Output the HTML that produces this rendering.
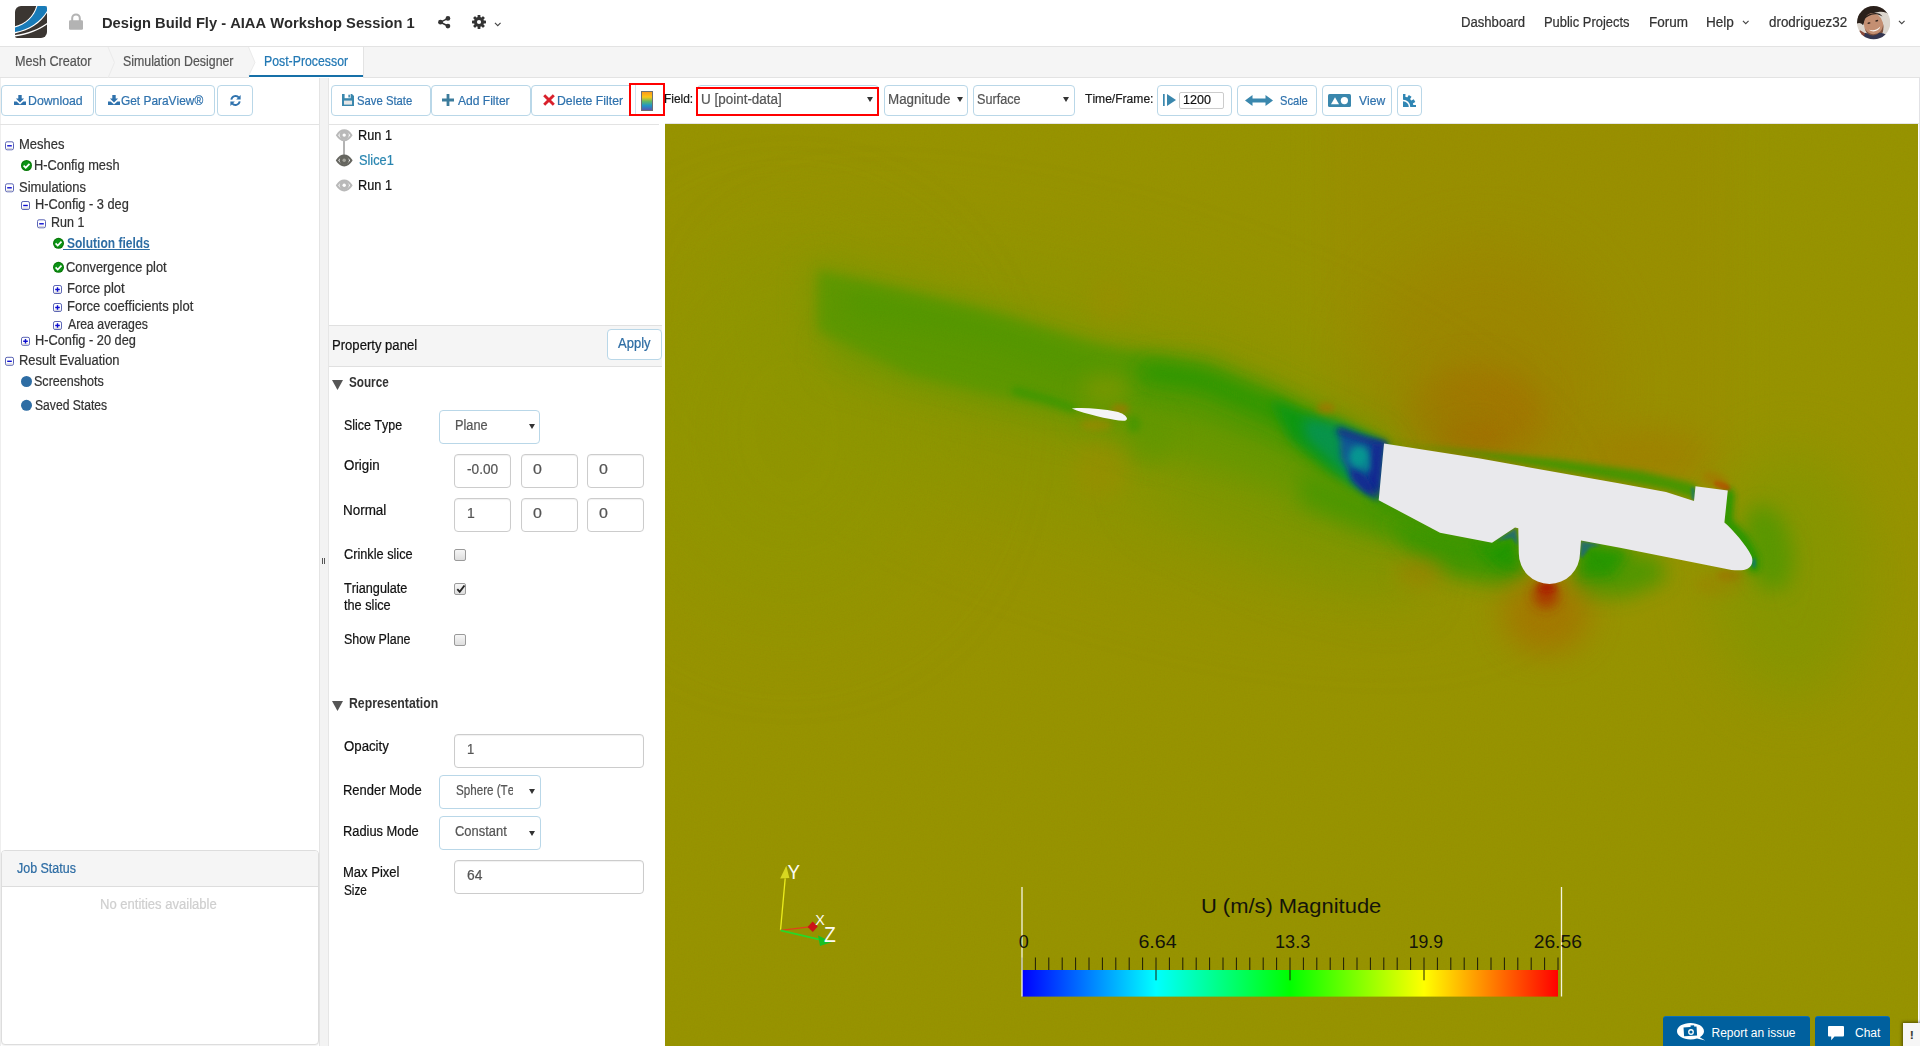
<!DOCTYPE html>
<html lang="en">
<head>
<meta charset="utf-8">
<title>Design Build Fly - AIAA Workshop Session 1 - Post-Processor</title>
<style>
*{box-sizing:border-box;margin:0;padding:0}
html,body{width:1920px;height:1046px;overflow:hidden;background:#fff}
body{font-family:"Liberation Sans",sans-serif;font-size:14px;color:#333;position:relative;font-kerning:none}
.abs{position:absolute}
.t{position:absolute;white-space:nowrap;line-height:1;transform-origin:0 0;display:block;-webkit-text-stroke:.22px currentColor}
.btn{position:absolute;border:1px solid #b9d7e8;border-radius:4px;background:#fff}
.inp{position:absolute;border:1px solid #ccc;border-radius:4px;background:#fff;box-shadow:inset 0 1px 1px rgba(0,0,0,.06)}
.sel{position:absolute;border:1px solid #b9d7e8;border-radius:4px;background:#fff}
.arr{position:absolute;width:0;height:0;border-left:3px solid transparent;border-right:3px solid transparent;border-top:5.5px solid #333}
.cb{position:absolute;width:12px;height:12px;border:1px solid #9a9a9a;border-radius:2px;background:linear-gradient(#f6f6f6,#dedede)}
svg{position:absolute;overflow:visible}
#header{left:0;top:0;width:1920px;height:46px;background:#fff}
#tabs{left:0;top:46px;width:1920px;height:32px;background:#f5f5f5;border-top:1px solid #e3e3e3;border-bottom:1px solid #e3e3e3}
#left{left:0;top:78px;width:320px;height:968px;background:#fff;box-shadow:inset -1px 0 0 #e4e4e4, inset 1px 0 0 #eee}
#split{left:320px;top:78px;width:9px;height:968px;background:#f3f3f3;border-right:1px solid #e6e6e6}
#mid{left:329px;top:78px;width:336px;height:968px;background:#fff}
#tool{left:665px;top:78px;width:1255px;height:46px;background:#fff}
#viz{left:665px;top:124px;width:1253px;height:922px;background:#969200}
#redge{left:1919px;top:78px;width:1px;height:968px;background:#e2e2e6}
</style>
</head>
<body>
<!-- ===== top header ===== -->
<div id="header" class="abs">
  <svg id="logo" style="left:15px;top:6px" width="32" height="32" viewBox="0 0 32 32">
    <defs><clipPath id="lgc"><path d="M6 0H30a2 2 0 0 1 2 2V26a6 6 0 0 1-6 6H2a2 2 0 0 1-2-2V6a6 6 0 0 1 6-6z"/></clipPath></defs>
    <g clip-path="url(#lgc)">
      <rect width="32" height="32" fill="#3b3632"/>
      <path d="M-1 20.600C10 18 19 10 21.500 -1L33 -1L33 5C27 17 14 25 -1 27.600Z" fill="#fff"/>
      <path d="M-1 21.800C10.500 19 20 10.500 22.700 -1L33 -1L33 3.200C26.500 15.500 14 23.600 -1 26.300Z" fill="#187bb8"/>
      <path d="M-1 29.200C13 27.500 25 22.500 33 16.200L33 17.800C25 24 13 29 -1 30.600Z" fill="#fff"/>
    </g>
  </svg>
  <svg id="lock" style="left:69px;top:13px" width="14" height="17" viewBox="0 0 14 17">
    <path d="M3.2 8V5.2a3.8 3.8 0 0 1 7.6 0V8" fill="none" stroke="#b3b3b3" stroke-width="2"/>
    <rect x="0" y="7.3" width="14" height="9.4" rx="1.2" fill="#b3b3b3"/>
  </svg>
  <span class="t" style="left:102.3px;top:14.8px;font-size:15.5px;color:#2b2b2b;transform:scaleX(0.9480);font-weight:700;-webkit-text-stroke:0;">Design Build Fly - AIAA Workshop Session 1</span>
  <svg id="share" style="left:437.600px;top:15.900px" width="12.400" height="12.400" viewBox="0 0 13 13">
    <path d="M10.400 2.500L2.600 6.500l7.800 4" fill="none" stroke="#333" stroke-width="1.600"/>
    <circle cx="10.400" cy="2.500" r="2.500" fill="#333"/><circle cx="2.600" cy="6.500" r="2.500" fill="#333"/><circle cx="10.400" cy="10.500" r="2.500" fill="#333"/>
  </svg>
  <svg id="gear" style="left:472px;top:15.200px" width="14" height="14" viewBox="0 0 14 14">
    <g fill="#333"><circle cx="7" cy="7" r="5"/>
    <g id="gt"><rect x="5.6" y="0" width="2.8" height="14" rx=".6"/></g>
    <rect x="5.6" y="0" width="2.8" height="14" rx=".6" transform="rotate(45 7 7)"/>
    <rect x="5.6" y="0" width="2.8" height="14" rx=".6" transform="rotate(90 7 7)"/>
    <rect x="5.6" y="0" width="2.8" height="14" rx=".6" transform="rotate(135 7 7)"/></g>
    <circle cx="7" cy="7" r="2.1" fill="#fff"/>
  </svg>
  <svg style="left:494.300px;top:21.800px" width="7.500" height="5" viewBox="0 0 8 5"><path d="M1 .8L4 3.8L7 .8" fill="none" stroke="#444" stroke-width="1.2"/></svg>

  <span class="t" style="left:1461.2px;top:15.0px;font-size:14px;color:#333;transform:scaleX(0.9368);">Dashboard</span>
  <span class="t" style="left:1544.4px;top:15.0px;font-size:14px;color:#333;transform:scaleX(0.9231);">Public Projects</span>
  <span class="t" style="left:1648.6px;top:15.0px;font-size:14px;color:#333;transform:scaleX(0.9642);">Forum</span>
  <span class="t" style="left:1706.3px;top:15.0px;font-size:14px;color:#333;transform:scaleX(0.9696);">Help</span>
  <svg style="left:1742.300px;top:19.600px" width="7.500" height="5" viewBox="0 0 8 5"><path d="M1 .8L4 3.8L7 .8" fill="none" stroke="#444" stroke-width="1.2"/></svg>
  <span class="t" style="left:1768.6px;top:15.0px;font-size:14px;color:#333;transform:scaleX(0.9565);">drodriguez32</span>
  <svg id="avatar" style="left:1857px;top:5.700px" width="33.300" height="33.300" viewBox="0 0 33 33">
    <defs><clipPath id="avc"><circle cx="16.500" cy="16.500" r="16.500"/></clipPath></defs>
    <g clip-path="url(#avc)">
      <rect width="33" height="33" fill="#dcd6ce"/>
      <path d="M-1 -1H34V10C30 6 25 5 21 6C14 7 9 11 6 19C4 17 2 16 -1 18Z" fill="#2a201b"/>
      <g transform="rotate(-14 16 19)">
        <ellipse cx="16.500" cy="19" rx="9.500" ry="12" fill="#c48f72"/>
        <path d="M7 20c1 9 5 12 9.500 12s8.500-3 9.500-12c-2 6-5 8-9.500 8S9 26 7 20z" fill="#7e523e"/>
        <path d="M11 22.500c3.500 2.200 8.500 2 11.500-.5c-1.500 4-9 4.500-11.500.5z" fill="#f7f1ec"/>
        <path d="M6.500 14C8 6 25 5 27 13c-4-4-7-4.500-10-4.300C13 9 9 10.500 6.500 14z" fill="#2a201b"/>
        <ellipse cx="12.500" cy="16" rx="1.500" ry=".8" fill="#3a2820"/><ellipse cx="20.500" cy="15.600" rx="1.500" ry=".8" fill="#3a2820"/>
      </g>
      <path d="M-1 34c2-7 7-8 11-7c4 3 8 3 12-.5c3 0 6 1 8 3l3 5z" fill="#343650"/>
      <path d="M3 24l5 3-3 7-6-2z" fill="#8a4a3a"/>
    </g>
  </svg>
  <svg style="left:1898.200px;top:19.600px" width="7.500" height="5" viewBox="0 0 8 5"><path d="M1 .8L4 3.8L7 .8" fill="none" stroke="#444" stroke-width="1.2"/></svg>
</div>

<!-- ===== workflow tabs ===== -->
<div id="tabs" class="abs">
  <div class="abs" style="left:249px;top:0;width:115px;height:31px;background:#fff;border-right:1px solid #e3e3e3"></div>
  <div class="abs" style="left:249px;top:28px;width:114px;height:2px;background:#1670a8"></div>
  <svg style="left:0;top:0" width="380" height="31" viewBox="0 0 380 31">
    <path d="M108 0L114.5 15.5L108 31" fill="none" stroke="#ebebeb" stroke-width="1"/>
    <path d="M248.5 0L255 15.5L248.5 29" fill="#f5f5f5" stroke="#ebebeb" stroke-width="1"/>
  </svg>
  <span class="t" style="left:15.2px;top:7.0px;font-size:14px;color:#555;transform:scaleX(0.9030);">Mesh Creator</span>
  <span class="t" style="left:122.5px;top:7.0px;font-size:14px;color:#555;transform:scaleX(0.8819);">Simulation Designer</span>
  <span class="t" style="left:263.8px;top:7.0px;font-size:14px;color:#2278b4;transform:scaleX(0.8784);">Post-Processor</span>
</div>
<!-- ===== left panel: project tree ===== -->
<div id="left" class="abs">
  <div class="btn" style="left:1px;top:7px;width:93px;height:31px"></div>
  <svg style="left:14px;top:17px" width="12" height="10" viewBox="0 0 12 10"><path d="M4.3 0h3.4v3.6h2.4L6 7.6 1.9 3.6h2.4z" fill="#2f72ad"/><path d="M0 6.6h2.6L6 9.4 9.4 6.6H12V10H0z" fill="#2f72ad"/></svg>
  <span class="t" style="left:27.5px;top:16.0px;font-size:13px;color:#2f72ad;transform:scaleX(0.9464);">Download</span>
  <div class="btn" style="left:95px;top:7px;width:120px;height:31px"></div>
  <svg style="left:108px;top:17px" width="12" height="10" viewBox="0 0 12 10"><path d="M4.3 0h3.4v3.6h2.4L6 7.6 1.9 3.6h2.4z" fill="#2f72ad"/><path d="M0 6.6h2.6L6 9.4 9.4 6.6H12V10H0z" fill="#2f72ad"/></svg>
  <span class="t" style="left:121.4px;top:16.0px;font-size:13px;color:#2f72ad;transform:scaleX(0.9149);">Get ParaView®</span>
  <div class="btn" style="left:217px;top:7px;width:36px;height:31px"></div>
  <svg style="left:230px;top:17px" width="11" height="11" viewBox="0 0 11 11">
    <path d="M1.3 4.6A4.3 4.3 0 0 1 8.9 2.7" fill="none" stroke="#2f72ad" stroke-width="1.9"/><path d="M10.6 0v4.4H6.2z" fill="#2f72ad"/>
    <path d="M9.7 6.4A4.3 4.3 0 0 1 2.1 8.3" fill="none" stroke="#2f72ad" stroke-width="1.9"/><path d="M.4 11V6.6h4.4z" fill="#2f72ad"/>
  </svg>
  <div class="abs" style="left:0;top:46px;width:319px;height:1px;background:#e3e3e3"></div>

  <svg id="tree-icons" style="left:0;top:0" width="320" height="420" viewBox="0 78 320 420">
    <defs>
      <g id="mi"><rect x=".5" y=".5" width="8" height="8" rx="1.600" fill="#fff" stroke="#5a64b4" stroke-width="1"/><path d="M1.500 7.200h6" stroke="#d4d4dc" stroke-width="1.400"/><path d="M2.200 4.500h4.600" stroke="#0c0cd2" stroke-width="1.400"/></g>
      <g id="pl"><rect x=".5" y=".5" width="8" height="8" rx="1.600" fill="#fff" stroke="#5a64b4" stroke-width="1"/><path d="M1.500 7.200h6" stroke="#d4d4dc" stroke-width="1.400"/><path d="M2.200 4.500h4.600M4.500 2.200v4.600" stroke="#0c0cd2" stroke-width="1.400"/></g>
      <g id="ck"><circle cx="5.500" cy="5.500" r="5.500" fill="#087a08"/><circle cx="5.500" cy="5.500" r="4.300" fill="#0c9416"/><path d="M2.6 5.6l2.1 2.1 3.8-3.9" fill="none" stroke="#fff" stroke-width="1.7"/></g>
      <g id="dot"><circle cx="5.5" cy="5.5" r="5.5" fill="#2e6da4"/></g>
    </defs>
    <use href="#mi" x="5" y="141.3"/>
    <use href="#ck" x="21" y="160"/>
    <use href="#mi" x="5" y="183.3"/>
    <use href="#mi" x="21" y="201"/>
    <use href="#mi" x="37" y="219.3"/>
    <use href="#ck" x="53" y="237.8"/>
    <use href="#ck" x="53" y="261.8"/>
    <use href="#pl" x="53" y="285"/>
    <use href="#pl" x="53" y="303"/>
    <use href="#pl" x="53" y="321"/>
    <use href="#pl" x="21" y="336.8"/>
    <use href="#mi" x="5" y="356.8"/>
    <use href="#dot" x="21" y="376"/>
    <use href="#dot" x="21" y="399.8"/>
  </svg>
  <span class="t" style="left:18.5px;top:59.4px;font-size:14px;color:#333;transform:scaleX(0.9266);">Meshes</span>
  <span class="t" style="left:34.0px;top:80.0px;font-size:14px;color:#333;transform:scaleX(0.9160);">H-Config mesh</span>
  <span class="t" style="left:18.9px;top:101.5px;font-size:14px;color:#333;transform:scaleX(0.9249);">Simulations</span>
  <span class="t" style="left:34.6px;top:119.0px;font-size:14px;color:#333;transform:scaleX(0.9132);">H-Config - 3 deg</span>
  <span class="t" style="left:50.9px;top:137.4px;font-size:14px;color:#333;transform:scaleX(0.8926);">Run 1</span>
  <span class="t" style="left:66.8px;top:158.3px;font-size:14px;color:#2e6da4;transform:scaleX(0.8586);font-weight:700;-webkit-text-stroke:0;text-decoration:underline;">Solution fields</span>
  <div class="abs" style="left:63px;top:171px;width:5px;height:1px;background:#2e6da4"></div>
  <span class="t" style="left:66.4px;top:182.1px;font-size:14px;color:#333;transform:scaleX(0.9166);">Convergence plot</span>
  <span class="t" style="left:66.9px;top:203.0px;font-size:14px;color:#333;transform:scaleX(0.9262);">Force plot</span>
  <span class="t" style="left:66.9px;top:220.8px;font-size:14px;color:#333;transform:scaleX(0.9270);">Force coefficients plot</span>
  <span class="t" style="left:67.9px;top:238.8px;font-size:14px;color:#333;transform:scaleX(0.8772);">Area averages</span>
  <span class="t" style="left:34.6px;top:254.6px;font-size:14px;color:#333;transform:scaleX(0.9134);">H-Config - 20 deg</span>
  <span class="t" style="left:18.5px;top:274.7px;font-size:14px;color:#333;transform:scaleX(0.9226);">Result Evaluation</span>
  <span class="t" style="left:34.4px;top:295.9px;font-size:14px;color:#333;transform:scaleX(0.8964);">Screenshots</span>
  <span class="t" style="left:34.5px;top:320.0px;font-size:14px;color:#333;transform:scaleX(0.8658);">Saved States</span>

  <!-- job status -->
  <div id="jobs" class="abs" style="left:1px;top:772px;width:318px;height:195px;border:1px solid #ddd;border-radius:4px;background:#fff;box-shadow:0 1px 1px rgba(0,0,0,.05)">
    <div class="abs" style="left:0;top:0;width:316px;height:36px;background:#f5f5f5;border-bottom:1px solid #ddd;border-radius:3px 3px 0 0"></div>
  </div>
  <span class="t" style="left:17.4px;top:783.0px;font-size:14px;color:#2e6da4;transform:scaleX(0.8902);">Job Status</span>
  <span class="t" style="left:100.2px;top:819.1px;font-size:14px;color:#cfcfcf;transform:scaleX(0.9312);">No entities available</span>
</div>
<div id="split" class="abs">
  <div class="abs" style="left:2px;top:480px;width:1px;height:6px;background:#555"></div>
  <div class="abs" style="left:4px;top:480px;width:1px;height:6px;background:#555"></div>
</div>
<!-- ===== middle panel: pipeline + property panel ===== -->
<div id="mid" class="abs">
  <div class="btn" style="left:2px;top:7px;width:100px;height:31px"></div>
  <svg style="left:13px;top:16px" width="12" height="12" viewBox="0 0 12 12"><path d="M0 0h10l2 2v10H0z" fill="#3a87ad"/><rect x="2.6" y="0" width="6" height="4.2" fill="#fff"/><rect x="6.4" y=".7" width="1.5" height="2.8" fill="#3a87ad"/><rect x="2" y="6.6" width="8" height="4" fill="#e6e6e6"/></svg>
  <span class="t" style="left:28.0px;top:16.2px;font-size:13px;color:#2f72ad;transform:scaleX(0.8689);">Save State</span>
  <div class="btn" style="left:102px;top:7px;width:100px;height:31px"></div>
  <svg style="left:113px;top:16px" width="12" height="12" viewBox="0 0 12 12"><path d="M4.6 0h2.8v4.6H12v2.8H7.4V12H4.6V7.4H0V4.6h4.6z" fill="#3c7c9c"/></svg>
  <span class="t" style="left:128.8px;top:16.2px;font-size:13px;color:#2f72ad;transform:scaleX(0.9282);">Add Filter</span>
  <div class="btn" style="left:202px;top:7px;width:106px;height:31px"></div>
  <svg style="left:213.5px;top:16px" width="12" height="12" viewBox="0 0 12 12"><path d="M1.2 1.2l9.6 9.6M10.8 1.2l-9.6 9.6" stroke="#d9202b" stroke-width="2.9"/></svg>
  <span class="t" style="left:227.7px;top:16.2px;font-size:13px;color:#2f72ad;transform:scaleX(0.9423);">Delete Filter</span>
  <!-- colour legend toggle (highlighted) -->
  <div class="abs" style="left:300px;top:5px;width:36px;height:33px;border:2px solid #f00;background:#fff"></div>
  <div class="abs" style="left:306px;top:7px;width:1px;height:29px;background:#cfe3ef"></div>
  <div class="abs" style="left:312px;top:13px;width:12px;height:20px;border:1.5px solid #6e6e72;background:linear-gradient(#fb9a1a 0%,#fbc616 28%,#63b864 52%,#1f95c9 76%,#5a58ae 100%)"></div>
  <div class="abs" style="left:0;top:46px;width:330px;height:1px;background:#e3e3e3"></div>

  <!-- pipeline -->
  <svg style="left:0;top:46px" width="70" height="80" viewBox="329 124 70 80">
    <defs>
      <g id="eye"><path d="M.8 5.800C3.200 2 5.600 .8 8 .8s4.800 1.200 7.200 5c-2.400 3.800-4.800 5-7.200 5S3.200 9.600 .8 5.800z" fill="#fff" stroke="currentColor" stroke-width="2"/><circle cx="8" cy="5.700" r="4.700" fill="currentColor"/></g>
    </defs>
    <path d="M344 141v14" stroke="#a6a6a6" stroke-width="1.700"/>
    <use href="#eye" x="336.200" y="129.400" color="#b9b9b9"/><circle cx="344.200" cy="135.100" r="1.700" fill="#fff"/>
    <use href="#eye" x="336.200" y="154.600" color="#666660"/><circle cx="344.200" cy="160.300" r="1.700" fill="#a4a49c"/>
    <use href="#eye" x="336.200" y="179.600" color="#b9b9b9"/><circle cx="344.200" cy="185.300" r="1.700" fill="#fff"/>
  </svg>
  <span class="t" style="left:29.3px;top:50.0px;font-size:14px;color:#111;transform:scaleX(0.9095);">Run 1</span>
  <span class="t" style="left:29.7px;top:75.0px;font-size:14px;color:#2985b0;transform:scaleX(0.9112);">Slice1</span>
  <span class="t" style="left:29.3px;top:99.7px;font-size:14px;color:#111;transform:scaleX(0.9095);">Run 1</span>

  <!-- property panel header -->
  <div class="abs" style="left:0;top:247px;width:333px;height:42px;background:#f5f5f5;border-top:1px solid #e0e0e0;border-bottom:1px solid #e0e0e0"></div>
  <span class="t" style="left:3.4px;top:259.5px;font-size:14px;color:#111;transform:scaleX(0.9348);">Property panel</span>
  <div class="btn" style="left:278px;top:251px;width:55px;height:31px"></div>
  <span class="t" style="left:289.3px;top:258.0px;font-size:14px;color:#2e6da4;transform:scaleX(0.9286);">Apply</span>

  <!-- Source group -->
  <svg style="left:3.300px;top:301.600px" width="11" height="10" viewBox="0 0 11 10"><path d="M0 0h11L5.500 10z" fill="#555"/></svg>
  <span class="t" style="left:20.0px;top:296.8px;font-size:14px;color:#333;transform:scaleX(0.8365);font-weight:600;-webkit-text-stroke:0;">Source</span>
  <span class="t" style="left:14.9px;top:339.7px;font-size:14px;color:#111;transform:scaleX(0.8889);">Slice Type</span>
  <div class="sel" style="left:110px;top:332px;width:101px;height:34px"></div>
  <span class="t" style="left:126.1px;top:339.7px;font-size:14px;color:#555;transform:scaleX(0.9088);">Plane</span>
  <div class="arr" style="left:199.500px;top:345.500px"></div>

  <span class="t" style="left:14.9px;top:380.1px;font-size:14px;color:#111;transform:scaleX(0.9533);">Origin</span>
  <div class="inp" style="left:125px;top:376px;width:57px;height:34px"></div>
  <div class="inp" style="left:192px;top:376px;width:57px;height:34px"></div>
  <div class="inp" style="left:258px;top:376px;width:57px;height:34px"></div>
  <span class="t" style="left:137.8px;top:383.8px;font-size:14px;color:#555;transform:scaleX(0.9756);">-0.00</span>
  <span class="t" style="left:203.6px;top:383.8px;font-size:14px;color:#555;transform:scaleX(1.1407);">0</span>
  <span class="t" style="left:270.3px;top:383.8px;font-size:14px;color:#555;transform:scaleX(1.1407);">0</span>

  <span class="t" style="left:14.4px;top:424.5px;font-size:14px;color:#111;transform:scaleX(0.9605);">Normal</span>
  <div class="inp" style="left:125px;top:420px;width:57px;height:34px"></div>
  <div class="inp" style="left:192px;top:420px;width:57px;height:34px"></div>
  <div class="inp" style="left:258px;top:420px;width:57px;height:34px"></div>
  <span class="t" style="left:137.8px;top:428.2px;font-size:14px;color:#555;transform:scaleX(0.9959);">1</span>
  <span class="t" style="left:203.6px;top:428.2px;font-size:14px;color:#555;transform:scaleX(1.1407);">0</span>
  <span class="t" style="left:270.3px;top:428.2px;font-size:14px;color:#555;transform:scaleX(1.1407);">0</span>

  <span class="t" style="left:14.8px;top:468.8px;font-size:14px;color:#111;transform:scaleX(0.9095);">Crinkle slice</span>
  <div class="cb" style="left:125px;top:471px"></div>
  <span class="t" style="left:15.3px;top:502.5px;font-size:14px;color:#111;transform:scaleX(0.9049);">Triangulate</span>
  <span class="t" style="left:15.3px;top:520.2px;font-size:14px;color:#111;transform:scaleX(0.9089);">the slice</span>
  <div class="cb" style="left:125px;top:505px"></div>
  <svg style="left:126.500px;top:505.500px" width="10" height="10" viewBox="0 0 10 10"><path d="M1.300 5.200l2.400 2.600 4.800-6.300" fill="none" stroke="#222" stroke-width="1.900"/></svg>
  <span class="t" style="left:14.9px;top:553.9px;font-size:14px;color:#111;transform:scaleX(0.8898);">Show Plane</span>
  <div class="cb" style="left:125px;top:556px"></div>

  <!-- Representation group -->
  <svg style="left:3.300px;top:623px" width="11" height="10" viewBox="0 0 11 10"><path d="M0 0h11L5.500 10z" fill="#555"/></svg>
  <span class="t" style="left:19.6px;top:618.0px;font-size:14px;color:#333;transform:scaleX(0.8748);font-weight:600;-webkit-text-stroke:0;">Representation</span>
  <span class="t" style="left:14.5px;top:661.0px;font-size:14px;color:#111;transform:scaleX(0.9451);">Opacity</span>
  <div class="inp" style="left:125px;top:656px;width:190px;height:34px"></div>
  <span class="t" style="left:137.7px;top:663.9px;font-size:14px;color:#555;transform:scaleX(0.9306);">1</span>
  <span class="t" style="left:14.1px;top:704.8px;font-size:14px;color:#111;transform:scaleX(0.9265);">Render Mode</span>
  <div class="sel" style="left:110px;top:697px;width:102px;height:34px"></div>
  <div class="abs" style="left:127px;top:702px;width:57px;height:24px;overflow:hidden"><span class="t" style="left:-0.4px;top:2.8px;font-size:14px;color:#555;transform:scaleX(0.8307);">Sphere (Tessellated)</span></div>
  <div class="arr" style="left:199.500px;top:711px"></div>
  <span class="t" style="left:14.1px;top:746.0px;font-size:14px;color:#111;transform:scaleX(0.9176);">Radius Mode</span>
  <div class="sel" style="left:110px;top:738px;width:102px;height:34px"></div>
  <span class="t" style="left:126.4px;top:746.0px;font-size:14px;color:#555;transform:scaleX(0.9234);">Constant</span>
  <div class="arr" style="left:199.500px;top:752.500px"></div>
  <span class="t" style="left:14.1px;top:787.0px;font-size:14px;color:#111;transform:scaleX(0.9313);">Max Pixel</span>
  <span class="t" style="left:14.6px;top:804.6px;font-size:14px;color:#111;transform:scaleX(0.8385);">Size</span>
  <div class="inp" style="left:125px;top:782px;width:190px;height:34px"></div>
  <span class="t" style="left:137.9px;top:789.7px;font-size:14px;color:#555;transform:scaleX(0.9878);">64</span>
</div>
<!-- ===== viewer toolbar ===== -->
<div id="tool" class="abs">
  <span class="t" style="left:-1.0px;top:14.7px;font-size:12.5px;color:#1a1a1a;transform:scaleX(0.9544);">Field:</span>
  <div class="sel" style="left:32px;top:7px;width:182px;height:31px"></div>
  <div class="abs" style="left:31px;top:9px;width:183px;height:29px;border:2px solid #f00;background:#fff"></div>
  <span class="t" style="left:36.4px;top:13.9px;font-size:14px;color:#555;transform:scaleX(0.9612);">U [point-data]</span>
  <div class="arr" style="left:201.500px;top:19px"></div>
  <div class="sel" style="left:219px;top:7px;width:84px;height:31px"></div>
  <span class="t" style="left:222.6px;top:13.9px;font-size:14px;color:#555;transform:scaleX(0.9556);">Magnitude</span>
  <div class="arr" style="left:291.500px;top:19px"></div>
  <div class="sel" style="left:308px;top:7px;width:102px;height:31px"></div>
  <span class="t" style="left:311.9px;top:13.9px;font-size:14px;color:#555;transform:scaleX(0.9043);">Surface</span>
  <div class="arr" style="left:398px;top:19px"></div>
  <span class="t" style="left:420.1px;top:15.0px;font-size:12.5px;color:#1a1a1a;transform:scaleX(0.9667);">Time/Frame:</span>
  <div class="btn" style="left:492px;top:7px;width:75px;height:31px"></div>
  <svg style="left:498px;top:16px" width="13" height="12" viewBox="0 0 13 12"><rect x="0" y="0" width="1.700" height="12" fill="#3a87ad"/><path d="M4 0l9 6-9 6z" fill="#3a87ad"/></svg>
  <div class="abs" style="left:514px;top:13.500px;width:45px;height:17px;border:1px solid #ccc;border-radius:2px;background:#fff"></div>
  <span class="t" style="left:518.3px;top:14.7px;font-size:13px;color:#111;transform:scaleX(0.9636);">1200</span>
  <div class="btn" style="left:572px;top:7px;width:80px;height:31px"></div>
  <svg style="left:580px;top:16.500px" width="28" height="11" viewBox="0 0 28 11"><path d="M0 5.500L7.500 0v3.400h13V0L28 5.500 20.500 11V7.600h-13V11z" fill="#3a87ad"/></svg>
  <span class="t" style="left:615.2px;top:16.0px;font-size:13px;color:#2f72ad;transform:scaleX(0.8544);">Scale</span>
  <div class="btn" style="left:657px;top:7px;width:70px;height:31px"></div>
  <svg style="left:663px;top:15.500px" width="23" height="13" viewBox="0 0 23 13"><rect width="23" height="13" rx="1.500" fill="#3a87ad"/><path d="M3 10.200L7 3.200l4 7z" fill="#fff"/><circle cx="16.400" cy="6.600" r="3.600" fill="#fff"/></svg>
  <span class="t" style="left:693.7px;top:16.0px;font-size:13px;color:#2f72ad;transform:scaleX(0.9297);">View</span>
  <div class="btn" style="left:732px;top:7px;width:25px;height:31px"></div>
  <svg style="left:738px;top:16px;overflow:hidden" width="13.200" height="13" viewBox="0 0 13.200 13">
    <g fill="#3086b4">
      <circle cx="0" cy="13" r="10.600"/>
      <rect x="-1.600" y="-0.200" width="3.200" height="5" transform="rotate(4 0 13)"/>
      <rect x="-1.600" y="-0.200" width="3.200" height="5" transform="rotate(33 0 13)"/>
      <rect x="-1.600" y="-0.200" width="3.200" height="5" transform="rotate(61 0 13)"/>
      <rect x="-1.600" y="-0.200" width="3.200" height="5" transform="rotate(88 0 13)"/>
    </g>
    <circle cx="0" cy="13" r="7.300" fill="#fff"/>
    <circle cx="0" cy="13" r="5.800" fill="#3086b4"/>
  </svg>
</div>
<div class="abs" style="left:665px;top:123px;width:1255px;height:1px;background:#e6e6e6"></div>
<div id="redge" class="abs"></div>
<!-- ===== 3D viewer (velocity magnitude slice) ===== -->
<div id="viz" class="abs">
<svg id="scene" style="left:0;top:0;overflow:hidden" width="1253" height="922" viewBox="665 124 1253 922">
  <defs>
    <filter id="b1" filterUnits="userSpaceOnUse" x="465" y="-76" width="1653" height="1322"><feGaussianBlur stdDeviation="1.5"/></filter>
    <filter id="b3" filterUnits="userSpaceOnUse" x="465" y="-76" width="1653" height="1322"><feGaussianBlur stdDeviation="3"/></filter>
    <filter id="b6" filterUnits="userSpaceOnUse" x="465" y="-76" width="1653" height="1322"><feGaussianBlur stdDeviation="6"/></filter>
    <filter id="b10" filterUnits="userSpaceOnUse" x="465" y="-76" width="1653" height="1322"><feGaussianBlur stdDeviation="10"/></filter>
    <filter id="b16" filterUnits="userSpaceOnUse" x="465" y="-76" width="1653" height="1322"><feGaussianBlur stdDeviation="16"/></filter>
    <filter id="b28" filterUnits="userSpaceOnUse" x="465" y="-76" width="1653" height="1322"><feGaussianBlur stdDeviation="28"/></filter>
    <filter id="b50" filterUnits="userSpaceOnUse" x="465" y="-76" width="1653" height="1322"><feGaussianBlur stdDeviation="50"/></filter>
    <filter id="nz" filterUnits="userSpaceOnUse" x="665" y="124" width="1253" height="922"><feTurbulence type="fractalNoise" baseFrequency=".7" numOctaves="2" seed="7"/><feColorMatrix type="matrix" values="1 0 0 0 0  0 1 0 0 0  0 0 0 0 0  0 0 0 0 .035"/></filter>
    <linearGradient id="wk" gradientUnits="userSpaceOnUse" x1="815" y1="300" x2="1384" y2="470">
      <stop offset="0" stop-color="#5e9600" stop-opacity=".85"/><stop offset=".6" stop-color="#4e9600" stop-opacity=".95"/><stop offset="1" stop-color="#1e9600" stop-opacity="1"/>
    </linearGradient>
    <linearGradient id="jet" x1="0" x2="1" y1="0" y2="0">
      <stop offset="0" stop-color="#0000ff"/><stop offset=".25" stop-color="#00ffff"/><stop offset=".5" stop-color="#00ff00"/><stop offset=".75" stop-color="#ffff00"/><stop offset="1" stop-color="#ff0000"/>
    </linearGradient>
    <path id="fus" d="M1384 443.500L1480 458.600L1620 483.600L1666 492L1694 501L1695.500 486.300L1727.800 490.500L1724.400 522.600C1733 530 1746 545 1751.500 556C1753.500 561 1752 566 1748 568.500C1745 570.500 1738 570.500 1731.600 570L1620 547.800L1581 540.400L1580 553.400A30.600 30.600 0 0 1 1518.800 553.400L1518.300 528.200L1515 527.400L1492 542.700L1440 532.800L1378.700 500.200Z"/>
  </defs>
  <rect id="bg" x="665" y="124" width="1253" height="922" fill="#959100"/>

  <!-- broad tone variations -->
  <rect x="1326" y="40" width="408" height="440" fill="#998b00" opacity=".62" filter="url(#b16)"/>
  <ellipse cx="1485" cy="385" rx="125" ry="140" fill="#9c8000" opacity=".62" filter="url(#b28)"/>
  <ellipse cx="1476" cy="416" rx="70" ry="50" fill="#a46c00" opacity=".68" filter="url(#b16)"/>
  <ellipse cx="1470" cy="438" rx="36" ry="14" fill="#a85e00" opacity=".55" filter="url(#b10)"/>
  <ellipse cx="1648" cy="456" rx="62" ry="28" fill="#a07800" opacity=".6" filter="url(#b16)"/>

  <!-- wakes -->
  <ellipse cx="1130" cy="420" rx="400" ry="120" transform="rotate(17 1130 420)" fill="#7c9600" opacity=".5" filter="url(#b50)"/>
  <ellipse cx="790" cy="430" rx="160" ry="190" fill="#8a9600" opacity=".55" filter="url(#b50)"/>
  <path d="M1150 440L1400 500L1410 600L1290 570L1150 500Z" fill="#6e9600" opacity=".5" filter="url(#b28)"/>
  <path d="M830 330L1008 372L1120 400L1120 440L1008 420L830 372Z" fill="#6e9600" opacity=".5" filter="url(#b16)"/>
  <path d="M812 262L910 285L1008 310L1105 340L1203 360L1268 385L1316 410L1384 440L1400 545L1330 520L1240 480L1150 450L1080 425L1008 405L910 382L812 335Z" fill="#6e9600" opacity=".7" filter="url(#b16)"/>
  <path d="M1076 396L1150 366L1203 365L1316 412L1384 444L1402 530L1330 506L1240 474L1150 448L1092 428Z" fill="#5e9600" opacity=".75" filter="url(#b16)"/>
  <path d="M830 300L910 318L1008 345L1072 365L1072 412L1008 400L910 378L830 345Z" fill="#6a9600" opacity=".5" filter="url(#b10)"/>
  <path d="M818 270L910 292L1008 317L1105 347L1203 366L1268 392L1316 417L1384 444L1380 498L1316 474L1268 448L1203 424L1140 410L1072 412L1008 398L910 374L818 330Z" fill="#569600" opacity=".85" filter="url(#b6)"/>
  <path d="M861 304L975 327L1072 360L1203 380L1268 408L1330 440L1380 470" fill="none" stroke="#469600" stroke-width="30" stroke-linecap="round" stroke-linejoin="round" opacity=".45" filter="url(#b10)"/>
  <path d="M1150 372L1203 380L1268 408L1330 440L1380 472" fill="none" stroke="#1e9600" stroke-width="26" stroke-linecap="round" stroke-linejoin="round" opacity=".7" filter="url(#b10)"/>
  <path d="M1270 398L1330 422L1384 446L1380 498L1330 474L1290 440Z" fill="#009614" opacity=".85" filter="url(#b6)"/>
  <!-- lower fuselage wake continuing under the tail boom -->
  <path d="M1300 470L1380 498L1440 532L1500 546L1500 562L1430 552L1360 530L1300 505Z" fill="#3c9600" opacity=".7" filter="url(#b10)"/>
  <!-- separated base region (blue) -->
  <path d="M1303 418L1340 424L1384 443L1379 500L1350 482L1325 456L1306 438Z" fill="#009258" opacity=".85" filter="url(#b6)"/>
  <path d="M1339 431L1384 444L1379 500L1354 483L1341 458Z" fill="#0a50a0" opacity=".9" filter="url(#b3)"/>
  <path d="M1340 431L1362 439L1384 445" fill="none" stroke="#0a2496" stroke-width="7" stroke-linecap="round" opacity=".9" filter="url(#b3)"/>
  <path d="M1372 444L1384 444L1379.500 499.500L1366 489Z" fill="#0a2496" opacity=".95" filter="url(#b3)"/>
  <path d="M1350 466L1366 476L1379 499L1362 490L1352 479Z" fill="#0a2496" opacity=".95" filter="url(#b3)"/>
  <ellipse cx="1359" cy="457" rx="10" ry="11" fill="#009896" opacity=".95" filter="url(#b3)"/>
  <ellipse cx="1366" cy="466" rx="4" ry="6" fill="#008c96" opacity=".8" filter="url(#b3)"/>

  <!-- under-body features -->
  <path d="M1385 518L1440 534L1492 544L1516 529L1519 556L1526 578L1500 586L1450 576L1410 552Z" fill="#2c9600" opacity=".8" filter="url(#b10)"/>
  <path d="M1470 540L1492 544L1516 529L1519 556L1524 574L1500 570Z" fill="#149600" opacity=".85" filter="url(#b6)"/>
  <path d="M1379 500L1440 533L1492 543" fill="none" stroke="#2a9600" stroke-width="14" stroke-linecap="round" stroke-linejoin="round" opacity=".7" filter="url(#b6)"/>
  <path d="M1496 541L1516 528L1518 546L1512 538Z" fill="#0a5aa0" opacity=".65" filter="url(#b1)"/>
  <ellipse cx="1420" cy="572" rx="24" ry="14" fill="#a07800" opacity=".5" filter="url(#b10)"/>
  <path d="M1581 541L1660 557L1668 580L1630 596L1590 598L1570 586L1580 556Z" fill="#3e9600" opacity=".8" filter="url(#b10)"/>
  <path d="M1581 541L1630 551L1612 576L1578 580L1580 556Z" fill="#149600" opacity=".8" filter="url(#b6)"/>
  <path d="M1581 541L1602 545L1590 547.500L1582 558L1580 556Z" fill="#0a5aa0" opacity=".65" filter="url(#b1)"/>
  <ellipse cx="1546" cy="614" rx="44" ry="40" fill="#a86a00" opacity=".7" filter="url(#b16)"/>
  <ellipse cx="1546" cy="595" rx="13" ry="13" fill="#aa2c00" opacity=".85" filter="url(#b6)"/>
  <ellipse cx="1547" cy="587.500" rx="9" ry="4.500" fill="#ac1000" opacity=".9" filter="url(#b3)"/>
  <ellipse cx="1730" cy="576" rx="13" ry="5.500" fill="#b45600" opacity=".85" filter="url(#b3)"/><ellipse cx="1722" cy="584" rx="26" ry="13" fill="#a87800" opacity=".5" filter="url(#b6)"/>

  <!-- nose stagnation -->
  <ellipse cx="1792" cy="575" rx="80" ry="125" fill="#7a9600" opacity=".6" filter="url(#b28)"/>
  <ellipse cx="1768" cy="548" rx="24" ry="44" transform="rotate(-12 1768 548)" fill="#4c9600" opacity=".8" filter="url(#b10)"/>
  <path d="M1729 494L1727 522L1743 539L1753 557L1754 567" fill="none" stroke="#1e9600" stroke-width="11" stroke-linecap="round" stroke-linejoin="round" opacity=".9" filter="url(#b3)"/>
  <ellipse cx="1754" cy="563" rx="1.600" ry="5" fill="#006c98" opacity=".8" filter="url(#b1)"/>

  <!-- upper surface boundary layer -->
  <path d="M1392 443L1480 456.500L1620 481L1668 490L1695 499L1696 484L1640 471L1560 460L1480 452Z" fill="#369600" opacity=".85" filter="url(#b3)"/>
  <path d="M1693 487.500L1693.500 500" fill="none" stroke="#00708c" stroke-width="3" opacity=".8" filter="url(#b1)"/>
  <ellipse cx="1722" cy="485.500" rx="9" ry="3.500" transform="rotate(22 1722 485.500)" fill="#b44600" opacity=".85" filter="url(#b1)"/><ellipse cx="1716" cy="480" rx="14" ry="7" transform="rotate(22 1716 480)" fill="#a86a00" opacity=".5" filter="url(#b3)"/>
  <ellipse cx="1326" cy="408" rx="9" ry="5" fill="#a87000" opacity=".7" filter="url(#b3)"/>

  <!-- tail plane surroundings -->
  <ellipse cx="1106" cy="390" rx="24" ry="16" fill="#8a9600" opacity=".55" filter="url(#b10)"/>
  <path d="M1072 408L1046 399L1016 391" fill="none" stroke="#2e9600" stroke-width="9" stroke-linecap="round" opacity=".65" filter="url(#b3)"/>
  <ellipse cx="1150" cy="440" rx="22" ry="28" fill="#5a9600" opacity=".5" filter="url(#b10)"/>
  <ellipse cx="1120" cy="409" rx="9" ry="5" fill="#a47400" opacity=".7" filter="url(#b3)"/>
  <ellipse cx="1096" cy="425" rx="16" ry="6" fill="#a08400" opacity=".6" filter="url(#b3)"/>
  <ellipse cx="1134" cy="424" rx="7" ry="9" fill="#3c9600" opacity=".7" filter="url(#b3)"/>
  <ellipse cx="1100" cy="470" rx="26" ry="30" fill="#9c8a00" opacity=".45" filter="url(#b10)"/>
  <ellipse cx="1110" cy="300" rx="20" ry="22" fill="#9c8a00" opacity=".4" filter="url(#b10)"/>

  <rect x="665" y="124" width="1253" height="922" filter="url(#nz)"/>

  <!-- bodies -->
  <use href="#fus" fill="#e9e9ec"/>
  <path id="tailfoil" d="M1071.800 408.400C1085 407.500 1100 408.500 1117 411.800C1122 413 1126 415.500 1127 418.500C1127 420.500 1125 421 1123 420.800C1113 420.200 1096 416.500 1076.800 410.500Z" fill="#f4f4f6"/>

  <!-- scalar bar -->
  <g id="legend" font-family="'Liberation Sans',sans-serif" fill="#14140a">
    <rect x="1022" y="970" width="536" height="26.600" fill="url(#jet)"/>
    <path d="M1022.0 957.5V970M1035.4 957.5V970M1048.8 957.5V970M1062.2 957.5V970M1075.6 957.5V970M1089.0 957.5V970M1102.4 957.5V970M1115.8 957.5V970M1129.2 957.5V970M1142.6 957.5V970M1156.0 957.5V980.3M1169.4 957.5V970M1182.8 957.5V970M1196.2 957.5V970M1209.6 957.5V970M1223.0 957.5V970M1236.4 957.5V970M1249.8 957.5V970M1263.2 957.5V970M1276.6 957.5V970M1290.0 957.5V980.3M1303.4 957.5V970M1316.8 957.5V970M1330.2 957.5V970M1343.6 957.5V970M1357.0 957.5V970M1370.4 957.5V970M1383.8 957.5V970M1397.2 957.5V970M1410.6 957.5V970M1424.0 957.5V980.3M1437.4 957.5V970M1450.8 957.5V970M1464.2 957.5V970M1477.6 957.5V970M1491.0 957.5V970M1504.4 957.5V970M1517.8 957.5V970M1531.2 957.5V970M1544.6 957.5V970M1558.0 957.5V970" stroke="#1c1c08" stroke-width="1" fill="none"/>
    <path d="M1022 887V996.600M1561.500 887V996.600" stroke="#f4f4e0" stroke-width="1.300" fill="none"/>
    <text x="1200.900" y="912.800" font-size="19.500" textLength="180.400" lengthAdjust="spacingAndGlyphs">U (m/s) Magnitude</text>
    <text x="1018.700" y="948.100" font-size="18" textLength="10" lengthAdjust="spacingAndGlyphs">0</text>
    <text x="1138.400" y="948.100" font-size="18" textLength="38.200" lengthAdjust="spacingAndGlyphs">6.64</text>
    <text x="1275" y="948.100" font-size="18" textLength="35.300" lengthAdjust="spacingAndGlyphs">13.3</text>
    <text x="1408.700" y="948.100" font-size="18" textLength="34.400" lengthAdjust="spacingAndGlyphs">19.9</text>
    <text x="1533.700" y="948.100" font-size="18" textLength="48.200" lengthAdjust="spacingAndGlyphs">26.56</text>
  </g>

  <!-- orientation axes -->
  <g id="axes">
    <path d="M780.500 930.400L785.200 878.400" stroke="#ecec1c" stroke-width="1.300"/>
    <path d="M786.300 865.800L780.200 878.600L789.400 878Z" fill="#d8d820"/>
    <path d="M780.500 930.400L809.400 926.800" stroke="#e0401c" stroke-width="1.300"/>
    <path d="M812.600 921.500L817.800 926.500L812.800 932L807.600 927Z" fill="#cc1418"/>
    <path d="M780.500 930.400L823 940.400" stroke="#28d828" stroke-width="1.600"/>
    <path d="M818 935.500L832 942L820 946Z" fill="#18c024"/>
    <g font-family="'Liberation Sans',sans-serif" fill="#fbfbf4">
      <text x="787.500" y="879.400" font-size="19.500" textLength="12.500" lengthAdjust="spacingAndGlyphs">Y</text>
      <text x="815.200" y="925.200" font-size="14.500" textLength="9.500" lengthAdjust="spacingAndGlyphs">X</text>
      <text x="824.100" y="942" font-size="22" textLength="11.800" lengthAdjust="spacingAndGlyphs">Z</text>
    </g>
  </g>
</svg>

  <!-- floating support buttons -->
  <div id="report" class="abs" style="left:998px;top:892px;width:147px;height:34px;background:#00609e;border-top:1px solid #0a70b8;border-radius:3px 3px 0 0"></div>
  <svg style="left:1012px;top:899px" width="29" height="18" viewBox="0 0 29 18">
    <path d="M13.500 0C21 0 27 3.600 27 8.200c0 2.400-1.600 4.500-4.200 6l5.400 3.300-8.200-2c-2 .6-4.200.9-6.500.9C6 16.400 0 12.800 0 8.200S6 0 13.500 0z" fill="#fff"/>
    <path d="M6.500 4.500l13-.900.600 8.800-13 .900z" fill="#00609e"/><path d="M13.500 2.600l3.600-.3.200 1.800-3.600.300z" fill="#00609e"/>
    <circle cx="14" cy="9" r="2.900" fill="#fff"/><circle cx="14" cy="9" r="1.600" fill="#00609e"/>
  </svg>
  <span class="t" style="left:1046.500px;top:903px;font-size:12px;color:#fff;-webkit-text-stroke:0">Report an issue</span>
  <div id="chat" class="abs" style="left:1150px;top:892px;width:75px;height:34px;background:#00609e;border-top:1px solid #0a70b8;border-radius:3px 3px 0 0"></div>
  <svg style="left:1163px;top:902px" width="16" height="15" viewBox="0 0 16 15"><path d="M1 0h14a1 1 0 0 1 1 1v8.500a1 1 0 0 1-1 1H6.500L3.200 14.200V10.500H1a1 1 0 0 1-1-1V1a1 1 0 0 1 1-1z" fill="#fff"/></svg>
  <span class="t" style="left:1190px;top:903px;font-size:12px;color:#fff;-webkit-text-stroke:0">Chat</span>
  <div id="notice" class="abs" style="left:1238px;top:899px;width:20px;height:30px;background:#f6f6f6;box-shadow:-1px -1px 3px rgba(0,0,0,.45)"></div>
  <span class="t" style="left:1245px;top:906px;font-size:11px;font-weight:700;color:#333">!</span>
</div>
</body>
</html>
